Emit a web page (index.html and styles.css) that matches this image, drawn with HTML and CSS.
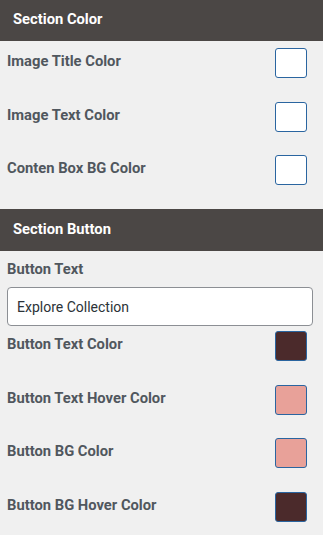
FILE: index.html
```html
<!DOCTYPE html>
<html lang="en">
<head>
    <meta charset="UTF-8">
    <meta name="viewport" content="width=device-width, initial-scale=1.0">
    <title>Section settings</title>
    <link rel="stylesheet" href="styles.css">
</head>
<body>
    <div class="panel-section">
        <div class="section-title">Section Color</div>
        <div class="color-list first-list">
            <div class="color-row">
                <span class="color-label">Image Title Color</span>
                <span class="swatch swatch-white"></span>
            </div>
            <div class="color-row">
                <span class="color-label">Image Text Color</span>
                <span class="swatch swatch-white"></span>
            </div>
            <div class="color-row">
                <span class="color-label">Conten Box BG Color</span>
                <span class="swatch swatch-white"></span>
            </div>
        </div>
    </div>
    <div class="panel-section">
        <div class="section-title section-title-tall">Section Button</div>
        <div class="text-field">
            <label class="field-label" for="button-text">Button Text</label>
            <input id="button-text" class="field-input" type="text" value="Explore Collection">
        </div>
        <div class="color-list">
            <div class="color-row">
                <span class="color-label">Button Text Color</span>
                <span class="swatch swatch-dark"></span>
            </div>
            <div class="color-row">
                <span class="color-label">Button Text Hover Color</span>
                <span class="swatch swatch-pink"></span>
            </div>
            <div class="color-row">
                <span class="color-label">Button BG Color</span>
                <span class="swatch swatch-pink"></span>
            </div>
            <div class="color-row">
                <span class="color-label">Button BG Hover Color</span>
                <span class="swatch swatch-dark"></span>
            </div>
        </div>
    </div>
</body>
</html>
```
FILE: styles.css
```css
body {
    margin: 0;
    background: #f0f0f0;
    font-family: Roboto, "Liberation Sans", sans-serif;
    font-size: 14.75px;
    color: #50575e;
}
.section-title {
    height: 41px;
    line-height: 39px;
    padding: 0 13px;
    background: #4b4745;
    color: #ffffff;
    font-weight: 700;
}
.section-title-tall {
    height: 42px;
    line-height: 40px;
}
.color-list {
    display: flex;
    flex-direction: column;
    gap: 23.5px;
    padding: 5px 16px 0 7px;
}
.first-list {
    padding-top: 7px;
    padding-bottom: 24px;
}
.color-row {
    display: flex;
    align-items: center;
    justify-content: space-between;
    height: 30px;
}
.color-label {
    font-weight: 700;
    margin-bottom: 4px;
}
.swatch {
    width: 30px;
    height: 28px;
    border: 1px solid #2a65a0;
    border-radius: 3px;
}
.swatch-white {
    background: #ffffff;
}
.swatch-dark {
    background: #4b2a2b;
}
.swatch-pink {
    background: #e8a199;
}
.text-field {
    padding: 8px 10px 0 7px;
}
.field-label {
    display: block;
    font-weight: 700;
    line-height: 20px;
    margin-bottom: 8px;
}
.field-input {
    box-sizing: border-box;
    width: 100%;
    height: 39px;
    padding: 0 9px;
    border: 1px solid #8c8f94;
    border-radius: 4px;
    background: #ffffff;
    color: #2c3338;
    font-family: Roboto, "Liberation Sans", sans-serif;
    font-size: 14px;
}
```
